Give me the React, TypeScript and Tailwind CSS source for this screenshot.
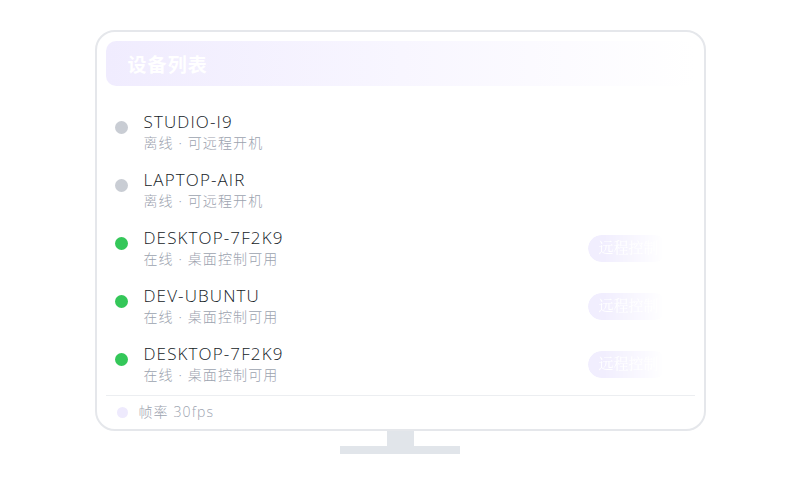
import React from "react";

const devices = [
  { name: "STUDIO-I9", online: false, sub: "离线 · 可远程开机" },
  { name: "LAPTOP-AIR", online: false, sub: "离线 · 可远程开机" },
  { name: "DESKTOP-7F2K9", online: true, sub: "在线 · 桌面控制可用" },
  { name: "DEV-UBUNTU", online: true, sub: "在线 · 桌面控制可用" },
  { name: "DESKTOP-7F2K9", online: true, sub: "在线 · 桌面控制可用" },
];

export default function App() {
  return (
    <div
      className="w-[800px] h-[500px] bg-white flex flex-col items-center pt-[30px] font-light tracking-[0.07em]"
      style={{ fontFamily: '"Open Sans", "Noto Sans CJK SC", sans-serif' }}
    >
      <div className="w-[611px] h-[401px] border-2 border-[#e5e7eb] rounded-[20px] bg-white flex flex-col px-[9px] pt-[9px]">
        <div className="h-[45px] rounded-[10px] bg-gradient-to-r from-[#f0ecfe] via-[#f8f6ff] to-white flex items-center pl-[22px] pt-[4px]">
          <span className="text-white font-bold text-[19px] leading-none">设备列表</span>
        </div>
        <div className="flex flex-col pt-[25px]">
          {devices.map((d, i) => (
            <div key={i} className="flex items-center h-[58px] pb-[16px] pl-[9.5px] pr-[27px]">
              <div className="flex items-start flex-1">
                <div
                  className={`w-[13px] h-[13px] rounded-full mt-[9.5px] shrink-0 ${
                    d.online ? "bg-[#34c759]" : "bg-[#c9cdd4]"
                  }`}
                />
                <div className="flex flex-col ml-[15.5px]">
                  <span className="text-[17px] leading-[22px] text-[#141a26]">{d.name}</span>
                  <span className="text-[14px] leading-[20px] text-[#9ca3af]">{d.sub}</span>
                </div>
              </div>
              {d.online && (
                <div className="w-[80px] h-[27px] rounded-full bg-[#f1eefe] flex items-center pl-[11px] [mask-image:linear-gradient(to_right,#000_20%,transparent_95%)]">
                  <span
                    className="text-white text-[15px] leading-none whitespace-nowrap font-normal tracking-normal"
                    style={{ fontFamily: '"Liberation Serif", "Noto Serif CJK SC", serif' }}
                  >
                    远程控制
                  </span>
                </div>
              )}
            </div>
          ))}
        </div>
        <div className="mt-[-6px] border-t border-[#eceef1] flex items-center h-[33px] pl-[11.5px]">
          <div className="w-[11px] h-[11px] rounded-full bg-[#eeeafd]" />
          <span className="ml-[10.5px] text-[14px] text-[#9ca3af] leading-none">帧率 30fps</span>
        </div>
      </div>
      <div className="w-[27px] h-[15px] bg-[#e1e5ea]" />
      <div className="w-[120px] h-[8px] bg-[#e1e5ea]" />
    </div>
  );
}
